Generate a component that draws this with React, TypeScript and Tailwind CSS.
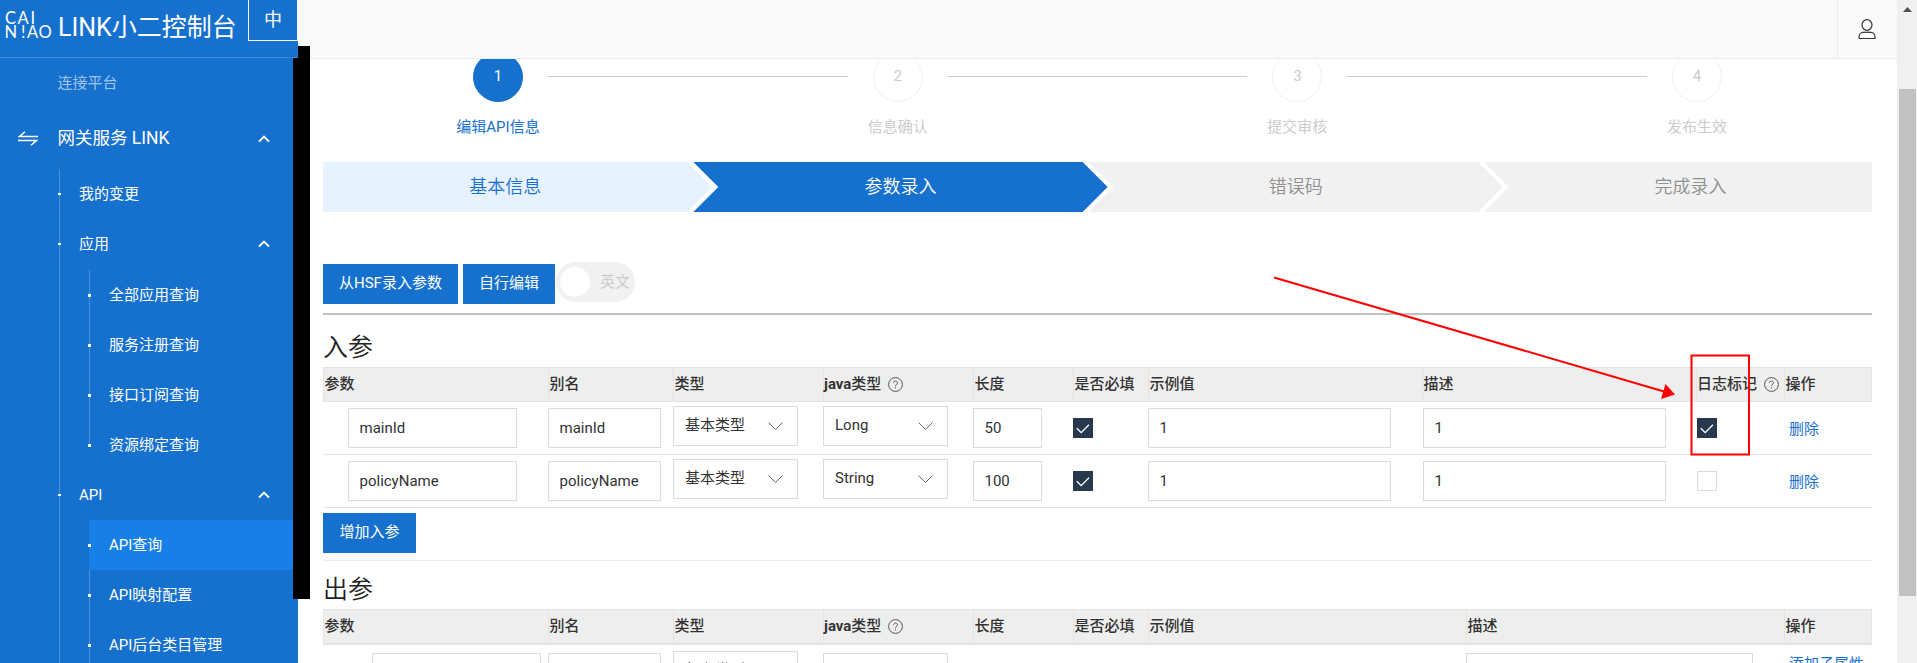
import type { ReactNode } from "react";
import clsx from "clsx";

const steps = ["编辑API信息", "信息确认", "提交审核", "发布生效"];

const inputParams = [
  { name: "mainId", alias: "mainId", javaType: "Long", length: "50", sample: "1", desc: "1", logged: true },
  { name: "policyName", alias: "policyName", javaType: "String", length: "100", sample: "1", desc: "1", logged: false },
];

function ChevronUp() {
  return (
    <svg className="absolute right-[23px] top-1/2 -mt-1 h-2 w-3" viewBox="0 0 12 8" fill="none" aria-hidden>
      <path d="M1 6.6 6 1.6l5 5" stroke="#fff" strokeWidth="2" />
    </svg>
  );
}

function HelpIcon() {
  return (
    <svg className="ml-[7px] size-[15px] shrink-0" viewBox="0 0 15 15" fill="none" stroke="#555" aria-hidden>
      <circle cx="7.5" cy="7.5" r="6.9" />
      <path d="M5.5 6.1c0-1.2.9-2 2-2s2 .8 2 1.8c0 1.4-2 1.5-2 3.2M7.5 10.2v1.2" />
    </svg>
  );
}

function Logo() {
  return (
    <svg className="h-8 w-[50px] shrink-0 overflow-visible" viewBox="0 0 50 32" fill="#fff" fontFamily="Lato, sans-serif" aria-hidden>
      <text x="0 12.5 25.5" y="14" fontSize="16.5">CAI</text>
      <text x="-.5 16 22 33.5" y="28" fontSize="16.5">N!AO</text>
    </svg>
  );
}

function MenuItem({ label, open }: { label: string; open?: boolean }) {
  return (
    <div className="relative flex h-[50px] items-center pl-5 text-[15px]">
      <span className="absolute -left-px top-6 h-0.5 w-[3px] bg-white" />
      {label}
      {open && <ChevronUp />}
    </div>
  );
}

function SubMenu({ items, active }: { items: string[]; active?: string }) {
  return (
    <div className="relative pl-[30px]">
      {items.map((item, i) => (
        <div
          key={item}
          className={clsx(
            "relative flex h-[50px] items-center pl-5 text-[15px]",
            item === active && "bg-[#187fe6]",
          )}
        >
          {item !== active && (
            <span className={clsx("absolute left-0 top-0 w-px bg-[#4a92dc]", !active && i === items.length - 1 ? "h-6" : "h-full")} />
          )}
          <span className="absolute -left-px top-6 size-[3px] bg-white" />
          {item}
        </div>
      ))}
    </div>
  );
}

function Sidebar() {
  return (
    <aside className="relative h-[663px] w-[298px] shrink-0 bg-[#1670ce] text-white">
      <div className="absolute left-[293px] top-[46px] h-[553px] w-[17px] bg-black" />
      <div className="relative flex h-[58px] border-b border-[#3d8ad9] bg-[#1670ce] pl-[5px]">
        <div className="mt-[10px] flex">
          <Logo />
        </div>
        <div className="ml-[3px] mt-[10px] whitespace-nowrap text-[25px] leading-9">LINK小二控制台</div>
        <div className="absolute right-0 top-0 flex h-[41px] w-[50px] items-center justify-center border-x border-b border-white text-lg">
          中
        </div>
      </div>
      <nav className="w-[293px]">
        <div className="flex h-[50px] items-center pl-[57.5px] text-[15px] text-white/60">连接平台</div>
        <div className="relative flex h-[61px] items-center pl-[57.5px] text-[17.5px]">
          <svg className="absolute left-[18px] top-[23px] h-[15px] w-5" viewBox="0 0 20 15" fill="none" stroke="#fff" strokeWidth="1.4" aria-hidden>
            <path d="M20 5.5H1.5L7 .8M0 9.5h18.5L13 14.2" />
          </svg>
          网关服务 LINK
          <ChevronUp />
        </div>
        <div className="relative ml-[59px]">
          <div className="absolute left-0 top-0 h-[494px] w-px bg-[#4a92dc]" />
          <MenuItem label="我的变更" />
          <MenuItem label="应用" open />
          <div className="mt-px">
            <SubMenu items={["全部应用查询", "服务注册查询", "接口订阅查询", "资源绑定查询"]} />
          </div>
          <MenuItem label="API" open />
          <SubMenu items={["API查询", "API映射配置", "API后台类目管理"]} active="API查询" />
        </div>
      </nav>
    </aside>
  );
}

function TopBar() {
  return (
    <header className="flex h-[59px] shrink-0 justify-end border-b border-[#ebebeb] bg-[#fafafa]">
      <div className="flex w-[60px] items-center justify-center border-l border-[#ebebeb] pr-px">
        <svg className="h-[21px] w-[18px]" viewBox="0 0 18 21" fill="none" stroke="#333" strokeWidth="1.2" aria-hidden>
          <ellipse cx="9" cy="6" rx="5" ry="5.3" />
          <path d="M5 13.300h8" />
          <path d="M1 19.500v-1.200c0-2.600 1.700-5 4-5M13 13.300c2.300 0 4 2.400 4 5v1.200H1" />
        </svg>
      </div>
    </header>
  );
}

function Steps() {
  return (
    <div className="-mt-[7px] flex px-[125px]">
      {steps.map((step, i) => (
        <div key={step} className={clsx("flex", i > 0 && "flex-1")}>
          {i > 0 && <div className="mt-6 h-px flex-1 bg-[#ccc]" />}
          <div className={clsx("flex w-[100px] flex-col items-center text-[15px]", i === 0 ? "text-[#1670ce]" : "text-[#ccc]")}>
            <div
              className={clsx(
                "flex size-[50px] items-center justify-center rounded-full border pb-px",
                i === 0 ? "border-[#1670ce] bg-[#1670ce] text-white" : "border-[#f0f0f0]",
              )}
            >
              {i + 1}
            </div>
            <div className="mt-[13px] whitespace-nowrap leading-6">{step}</div>
          </div>
        </div>
      ))}
    </div>
  );
}

function ArrowSteps() {
  return (
    <div className="mt-[23px] flex h-[50px] text-lg font-[350] leading-[50px]">
      <div className="w-[389.3px] bg-[#e6f2ff] pr-[25px] text-center text-[#1670ce] [clip-path:polygon(0_0,calc(100%-25px)_0,100%_50%,calc(100%-25px)_100%,0_100%)]">
        基本信息
      </div>
      <div className="-ml-[19px] w-[414.3px] bg-[#1670ce] px-[25px] text-center text-white [clip-path:polygon(0_0,calc(100%-25px)_0,100%_50%,calc(100%-25px)_100%,0_100%,25px_50%)]">
        参数录入
      </div>
      <div className="-ml-[19px] w-[414.3px] bg-[#f1f1f1] px-[25px] text-center text-[#909090] [clip-path:polygon(0_0,calc(100%-25px)_0,100%_50%,calc(100%-25px)_100%,0_100%,25px_50%)]">
        错误码
      </div>
      <div className="-ml-[19px] flex-1 bg-[#f1f1f1] pl-[25px] text-center text-[#909090] [clip-path:polygon(0_0,100%_0,100%_100%,0_100%,25px_50%)]">
        完成录入
      </div>
    </div>
  );
}

function Button({ children, className }: { children: ReactNode; className?: string }) {
  return (
    <button className={clsx("h-10 whitespace-nowrap bg-[#1670ce] px-4 pb-px text-[15px] text-white", className)}>
      {children}
    </button>
  );
}

function Field({ value, className }: { value?: string; className: string }) {
  return (
    <div className={clsx("mt-1.5 flex h-10 items-center border border-[#dcdcdc] bg-white pl-[10.5px] text-[#333]", className)}>
      {value}
    </div>
  );
}

function Select({ value, className }: { value?: string; className?: string }) {
  return (
    <div className={clsx("mt-1 flex h-10 w-[125px] items-center justify-between border border-[#dcdcdc] bg-white pl-[11px] pr-[14px] text-[#333]", className)}>
      <span className="pb-px">{value}</span>
      {value && (
        <svg className="h-2 w-[15px]" viewBox="0 0 15 8" fill="none" stroke="#666" aria-hidden>
          <path d="m.5.500 7 7 7-7" />
        </svg>
      )}
    </div>
  );
}

function Checkbox({ checked, className }: { checked: boolean; className?: string }) {
  return (
    <div className={clsx("mt-4 size-5 border", checked ? "border-[#28384d] bg-[#28384d]" : "border-[#dcdcdc] bg-white", className)}>
      {checked && (
        <svg className="mt-[5px] ml-0.5 h-2.5 w-3.5" viewBox="0 0 14 10" fill="none" stroke="#fff" strokeWidth="1.3" aria-hidden>
          <path d="m.8 4.200 4.400 4.400L13 .8" />
        </svg>
      )}
    </div>
  );
}

function HeadCell({ children, help }: { children: ReactNode; help?: boolean }) {
  return (
    <div className={clsx("flex items-center border-l border-[#e4e4e4] pb-px font-medium", help ? "pt-px" : "pl-[.5px]")}>
      {children}
      {help && <HelpIcon />}
    </div>
  );
}

const inCols = "grid grid-cols-[225px_125px_150px_150px_100px_75px_274px_274px_88px_88px]";
const outCols = "grid grid-cols-[225px_125px_150px_150px_100px_75px_318px_318px_88px]";

function InputTable() {
  return (
    <div className="text-[15px] text-[#333]">
      <div className={clsx(inCols, "h-[35px] border-y border-r border-[#e4e4e4] bg-[#eee]")}>
        <HeadCell>参数</HeadCell>
        <HeadCell>别名</HeadCell>
        <HeadCell>类型</HeadCell>
        <HeadCell help><b>java</b>类型</HeadCell>
        <HeadCell>长度</HeadCell>
        <HeadCell>是否必填</HeadCell>
        <HeadCell>示例值</HeadCell>
        <HeadCell>描述</HeadCell>
        <HeadCell help>日志标记</HeadCell>
        <HeadCell>操作</HeadCell>
      </div>
      {inputParams.map((param) => (
        <div key={param.name} className={clsx(inCols, "h-[53px] border-b border-[#e4e4e4]")}>
          <Field value={param.name} className="ml-[25px] w-[169px]" />
          <Field value={param.alias} className="w-[113px]" />
          <Select value="基本类型" />
          <Select value={param.javaType} />
          <Field value={param.length} className="w-[69px]" />
          <Checkbox checked />
          <Field value={param.sample} className="w-[243px]" />
          <Field value={param.desc} className="ml-px w-[243px]" />
          <Checkbox checked={param.logged} className="ml-px" />
          <a className="ml-[5px] mt-[15px] leading-6 text-[#1670ce]">删除</a>
        </div>
      ))}
    </div>
  );
}

function OutputTable() {
  return (
    <div className="text-[15px] text-[#333]">
      <div className={clsx(outCols, "h-9 border-y border-b-2 border-r border-[#e4e4e4] bg-[#eee]")}>
        <HeadCell>参数</HeadCell>
        <HeadCell>别名</HeadCell>
        <HeadCell>类型</HeadCell>
        <HeadCell help><b>java</b>类型</HeadCell>
        <HeadCell>长度</HeadCell>
        <HeadCell>是否必填</HeadCell>
        <HeadCell>示例值</HeadCell>
        <HeadCell>描述</HeadCell>
        <HeadCell>操作</HeadCell>
      </div>
      <div className={clsx(outCols, "pt-0.5")}>
        <Field className="ml-[49px] w-[169px]" />
        <Field className="w-[113px]" />
        <Select value="复杂类型" />
        <Select className="mt-1.5" />
        <div className="col-span-3" />
        <Field className="w-[287px]" />
        <a className="ml-[5px] mt-[5px] whitespace-nowrap leading-6 text-[#1670ce]">添加子属性</a>
      </div>
    </div>
  );
}

function Scrollbar() {
  return (
    <div className="flex w-5 shrink-0 flex-col bg-[#f0f0f0] pl-0.5 pr-px">
      <svg className="mt-[7px] ml-1 h-[5px] w-[9px]" viewBox="0 0 9 5" fill="#505050" aria-hidden>
        <path d="M0 5 4.500 0 9 5z" />
      </svg>
      <div className="mt-[77px] h-[507px] bg-[#c1c1c1]" />
    </div>
  );
}

/** Red arrow and box pointing at the log flag column. */
function Callout() {
  return (
    <svg className="pointer-events-none absolute left-[1270px] top-[270px] h-[190px] w-[485px]" viewBox="1270 270 485 190" fill="none" aria-hidden>
      <path d="M1274 277.500 1664 391.500" stroke="#f00" strokeWidth="2" />
      <path d="m1675 394.500-14 4.500 4.500-15z" fill="#f00" />
      <rect x="1691.500" y="355.500" width="57.500" height="99" stroke="#f00" strokeWidth="2" />
    </svg>
  );
}

export default function App() {
  return (
    <div className="relative flex h-[663px] w-[1917px] overflow-hidden bg-white font-[Roboto,'Noto_Sans_CJK_SC',sans-serif]">
      <Sidebar />
      <div className="flex min-w-0 flex-1 flex-col">
        <TopBar />
        <main className="h-[604px] overflow-hidden pl-[25px] pr-[25px]">
          <Steps />
          <ArrowSteps />
          <div className="mt-[50px] flex h-[53px] items-start border-b-2 border-[#c1c1c1]">
            <div className="mt-0.5 flex gap-[5px]">
              <Button>从HSF录入参数</Button>
              <Button>自行编辑</Button>
            </div>
            <div className="ml-px flex h-10 w-[79px] items-center rounded-full bg-[#f1f1f1] pl-1 text-[15px] text-[#ccc]">
              <span className="mr-2.5 size-[30px] rounded-full bg-white" />
              英文
            </div>
          </div>
          <h2 className="mt-[15px] mb-px h-9 text-[25px] font-[350] leading-9 text-[#222]">入参</h2>
          <InputTable />
          <div className="h-[53px] border-b border-[#ebebeb] pt-[5px]">
            <Button className="w-[93px]">增加入参</Button>
          </div>
          <h2 className="mt-[11px] mb-px h-9 text-[25px] font-[350] leading-9 text-[#222]">出参</h2>
          <OutputTable />
        </main>
      </div>
      <Scrollbar />
      <Callout />
    </div>
  );
}
